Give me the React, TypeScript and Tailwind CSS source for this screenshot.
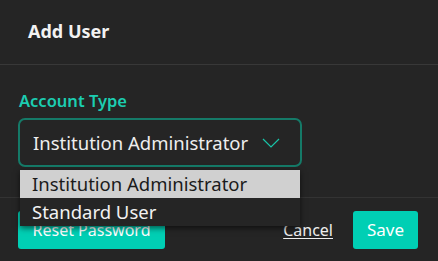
import React from "react";

const font = { fontFamily: '"Noto Sans", "Open Sans", sans-serif' };

const ChevronDown = () => (
  <svg width="18" height="10" viewBox="0 0 18 10" fill="none">
    <path d="M1 1l8 8 8-8" stroke="#19c4a8" strokeWidth="1.2" />
  </svg>
);

export default function App() {
  return (
    <div
      className="relative w-[438px] h-[261px] overflow-hidden bg-[#252525] text-[#f2f2f2]"
      style={font}
    >
      <div className="h-[65px] flex items-center px-[28px] pb-[2px] border-b border-[#383838]">
        <h2 className="text-[18px] font-bold">Add User</h2>
      </div>

      <div className="px-[18px] pt-[26px] h-[132px]">
        <label className="block text-[16.5px] font-semibold text-[#1ccdb1] leading-[20px] mb-[7px] ml-px">
          Account Type
        </label>
        <div className="w-[284px] h-[49px] rounded-[7px] border-2 border-[#157a68] flex items-center justify-between pl-[13px] pr-[20px]">
          <span className="text-[18.5px] text-[#eeeeee]">Institution Administrator</span>
          <ChevronDown />
        </div>
      </div>

      <div className="border-t border-[#333333] flex items-center justify-between px-[18px] pt-[13px]">
        <button className="h-[38px] w-[147px] rounded-[3px] bg-[#00cfb4] text-white text-[16px]">
          Reset Password
        </button>
        <div className="flex items-center gap-[20px] mr-[2px]">
          <button className="text-[16px] text-[#eeeeee] underline underline-offset-2">Cancel</button>
          <button className="h-[38px] w-[65px] rounded-[3px] bg-[#00cfb4] text-white text-[17px]">
            Save
          </button>
        </div>
      </div>

      <ul className="absolute left-[20px] top-[170px] w-[280px] bg-[#252525] shadow-[0_2px_6px_rgba(0,0,0,0.6)] text-[18.5px]">
        <li className="h-[28px] leading-[28px] pl-[12px] bg-[#d0d0d0] text-[#1b1b1b]">
          Institution Administrator
        </li>
        <li className="h-[28px] leading-[28px] pl-[12px] text-[#f2f2f2]">Standard User</li>
      </ul>
    </div>
  );
}
